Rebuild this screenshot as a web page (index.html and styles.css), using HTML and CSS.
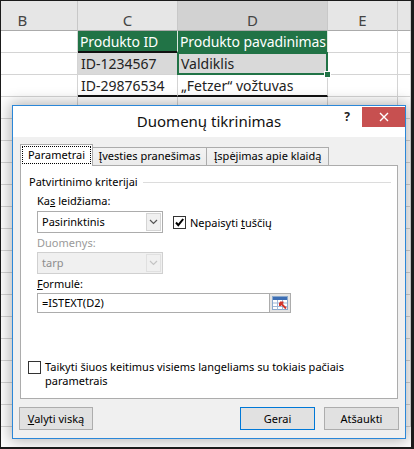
FILE: index.html
```html
<!DOCTYPE html>
<html lang="lt">
<head>
<meta charset="utf-8">
<title>Duomenų tikrinimas</title>
<link rel="stylesheet" href="styles.css">
</head>
<body>
<div class="screen">
  <div class="sheet">
    <div class="h">B</div><div class="h">C</div><div class="h hsel">D</div><div class="h">E</div><div class="h"></div>

    <div class="c"></div><div class="c th th-c"><span>Produkto ID</span></div><div class="c th"><span>Produkto pavadinimas</span></div><div class="c"></div><div class="c"></div>
    <div class="c"></div><div class="c gray"><span>ID-1234567</span></div><div class="c gray active"><span>Valdiklis</span></div><div class="c"></div><div class="c"></div>
    <div class="c"></div><div class="c last"><span>ID-29876534</span></div><div class="c last"><span>„Fetzer“ vožtuvas</span></div><div class="c"></div><div class="c"></div>
    <div class="c"></div><div class="c"></div><div class="c"></div><div class="c"></div><div class="c"></div>
    <div class="c"></div><div class="c"></div><div class="c"></div><div class="c"></div><div class="c"></div>
    <div class="c"></div><div class="c"></div><div class="c"></div><div class="c"></div><div class="c"></div>
    <div class="c"></div><div class="c"></div><div class="c"></div><div class="c"></div><div class="c"></div>
    <div class="c"></div><div class="c"></div><div class="c"></div><div class="c"></div><div class="c"></div>
    <div class="c"></div><div class="c"></div><div class="c"></div><div class="c"></div><div class="c"></div>
    <div class="c"></div><div class="c"></div><div class="c"></div><div class="c"></div><div class="c"></div>
    <div class="c"></div><div class="c"></div><div class="c"></div><div class="c"></div><div class="c"></div>
    <div class="c"></div><div class="c"></div><div class="c"></div><div class="c"></div><div class="c"></div>
    <div class="c"></div><div class="c"></div><div class="c"></div><div class="c"></div><div class="c"></div>
    <div class="c"></div><div class="c"></div><div class="c"></div><div class="c"></div><div class="c"></div>
    <div class="c"></div><div class="c"></div><div class="c"></div><div class="c"></div><div class="c"></div>
    <div class="c"></div><div class="c"></div><div class="c"></div><div class="c"></div><div class="c"></div>
    <div class="c"></div><div class="c"></div><div class="c"></div><div class="c"></div><div class="c"></div>
    <div class="c"></div><div class="c"></div><div class="c"></div><div class="c"></div><div class="c"></div>
  </div>

  <div class="dialog">
    <div class="titlebar">
      <div></div>
      <div class="title">Duomenų tikrinimas</div>
      <div class="ctrls">
        <span class="help">?</span>
        <span class="close">
          <svg width="10" height="10" viewBox="0 0 10 10"><path d="M1 1L9 9M9 1L1 9" stroke="#fff" stroke-width="1.4" fill="none"/></svg>
        </span>
      </div>
    </div>
    <div class="dbody">
      <div class="tabs">
        <div class="tab sel t1"><span class="focus">Parametrai</span></div>
        <div class="tab t2">Įvesties pranešimas</div>
        <div class="tab t3">Įspėjimas apie klaidą</div>
      </div>
      <div class="panel">
        <div class="group"><span>Patvirtinimo kriterijai</span><span class="rule"></span></div>
        <div class="fields">
          <div class="lbl l1">Ka<u>s</u> leidžiama:</div>
          <div class="row">
            <div class="select">
              <span class="val">Pasirinktinis</span>
              <span class="arrow"><svg width="9" height="6" viewBox="0 0 9 6"><path d="M1 1L4.5 4.5L8 1" stroke="#555" stroke-width="1.2" fill="none"/></svg></span>
            </div>
            <div class="check">
              <span class="box"><svg width="11" height="11" viewBox="0 0 11 11"><path d="M2 5.5L4.3 8.2L9.2 2" stroke="#000" stroke-width="2" fill="none"/></svg></span>
              <span>Nepaisyti <u>t</u>uščių</span>
            </div>
          </div>
          <div class="lbl dis l2">Duomenys:</div>
          <div class="select disabled">
            <span class="val">tarp</span>
            <span class="arrow"><svg width="9" height="6" viewBox="0 0 9 6"><path d="M1 1L4.5 4.5L8 1" stroke="#c4c4c4" stroke-width="1.2" fill="none"/></svg></span>
          </div>
          <div class="lbl l3"><u>F</u>ormulė:</div>
          <div class="formula">
            <span class="val">=ISTEXT(D2)</span>
            <span class="ref">
              <svg width="16" height="14" viewBox="0 0 16 14">
                <rect x="0.5" y="0.5" width="15" height="13" fill="#fff" stroke="#8aa8cc"/>
                <rect x="1" y="1" width="14" height="3" fill="#3d6eb4"/>
                <path d="M1 7H15M1 10.5H15M5.5 4V13.5M10.5 4V13.5" stroke="#9fb6d6" stroke-width="1"/>
                <path d="M14 12.5L8 6.5M8 6.5V10M8 6.5H11.5" stroke="#d2342a" stroke-width="2" fill="none"/>
              </svg>
            </span>
          </div>
        </div>
        <div class="apply">
          <span class="box"></span>
          <span class="txt">Taikyti šiuos keitimus visiems langeliams su tokiais pačiais parametrais</span>
        </div>
      </div>
      <div class="buttons">
        <button class="btn clear"><u>V</u>alyti viską</button>
        <button class="btn ok">Gerai</button>
        <button class="btn cancel">Atšaukti</button>
      </div>
    </div>
  </div>
</div>
</body>
</html>
```

FILE: styles.css
```css
html, body {
  margin: 0;
  padding: 0;
  background: #fff;
}

.screen {
  position: relative;
  width: 414px;
  height: 449px;
  box-sizing: border-box;
  border-style: solid;
  border-color: #1b1b1b;
  border-width: 1px 3px 2px 1px;
  overflow: hidden;
  background: #fff;
  font-family: "Noto Sans", "Open Sans", sans-serif;
}

/* ---------- spreadsheet ---------- */
.sheet {
  display: grid;
  grid-template-columns: 110px 100px 150px 70px 1fr;
  grid-template-rows: 30px;
  grid-auto-rows: 22px;
  margin-left: -33px;
}

.h {
  box-sizing: border-box;
  background: #e6e6e6;
  border-right: 1px solid #c8c8c8;
  border-bottom: 1px solid #ababab;
  color: #444;
  font-size: 15px;
  line-height: 19px;
  padding-top: 10px;
  text-align: center;
}

.h.hsel {
  background: #d2d2d2;
}

.c {
  position: relative;
  box-sizing: border-box;
  border-right: 1px solid #d4d4d4;
  border-bottom: 1px solid #d4d4d4;
  font-size: 14px;
  line-height: 21px;
  color: #222;
  white-space: nowrap;
}

.c span {
  display: block;
  padding-left: 3px;
  overflow: hidden;
}

.c.th {
  background: #217346;
  color: #fff;
  border-right-color: #d9e6de;
  border-bottom-color: #217346;
}

.c.th span {
  padding-left: 2px;
  letter-spacing: -0.1px;
}

.c.th-c {
  border-bottom: 2px solid #111;
}

.c.gray {
  background: #d9d9d9;
}

.c.last {
  border-bottom: 2px solid #111;
}

.c.active::after {
  content: "";
  position: absolute;
  left: -1px;
  top: -1px;
  right: -1px;
  bottom: -1px;
  border: 2px solid #217346;
}

.c.active::before {
  content: "";
  position: absolute;
  right: -4px;
  bottom: -4px;
  width: 5px;
  height: 5px;
  background: #217346;
  border: 1px solid #fff;
  z-index: 1;
}

/* ---------- dialog ---------- */
.dialog {
  position: absolute;
  left: 11px;
  top: 104px;
  width: 394px;
  height: 334px;
  box-sizing: border-box;
  border: 1px solid #2b87d8;
  background: #f0f0f0;
  box-shadow: 0 0 14px 2px rgba(0, 0, 0, 0.3);
  display: flex;
  flex-direction: column;
  font-size: 11px;
  color: #000;
}

.titlebar {
  height: 31px;
  flex: none;
  background: #fff;
  display: grid;
  grid-template-columns: 1fr auto 1fr;
}

.title {
  font-size: 15px;
  line-height: 31px;
  color: #111;
  white-space: nowrap;
}

.ctrls {
  display: flex;
  justify-content: flex-end;
  align-items: flex-start;
}

.help {
  font-weight: bold;
  font-size: 12px;
  line-height: 14px;
  margin-top: 4px;
  margin-right: 12px;
  color: #222;
}

.close {
  width: 43px;
  height: 20px;
  margin-top: 1px;
  background: #c75050;
  display: flex;
  align-items: center;
  justify-content: center;
}

.close svg {
  display: block;
}

.dbody {
  flex: 1;
  display: flex;
  flex-direction: column;
  padding: 7px 7px 8px 7px;
}

.tabs {
  display: flex;
  align-items: flex-end;
  height: 21px;
  flex: none;
}

.tab {
  height: 18px;
  box-sizing: border-box;
  border: 1px solid #acacac;
  border-bottom: none;
  background: linear-gradient(#f3f3f3, #ebebeb);
  line-height: 16px;
  text-align: center;
  white-space: nowrap;
  margin-left: -1px;
}

.tab.t1 { width: 73px; }
.tab.t2 { width: 115px; }
.tab.t3 { width: 123px; }

.tab.sel {
  height: 22px;
  margin-left: 0;
  margin-bottom: -1px;
  background: #fff;
  position: relative;
  z-index: 1;
  padding: 2px 2px 0;
}

.focus {
  display: block;
  outline: 1px dotted #000;
  line-height: 16px;
  height: 16px;
}

.panel {
  height: 234px;
  flex: none;
  box-sizing: border-box;
  border: 1px solid #acacac;
  background: #fff;
  padding: 0 6px 0 8px;
}

.group {
  display: flex;
  align-items: center;
  height: 14px;
  line-height: 14px;
  margin-top: 9px;
}

.group .rule {
  flex: 1;
  height: 1px;
  background: #dcdcdc;
  margin-left: 5px;
}

.fields {
  padding-left: 8px;
}

.lbl {
  line-height: 14px;
  height: 14px;
}

.lbl.l1 { margin-top: 5px; }
.lbl.l2 { margin-top: 3px; }
.lbl.l3 { margin-top: 3px; }

.lbl.dis {
  color: #9a9a9a;
}

.row {
  display: flex;
  align-items: center;
  margin-top: 3px;
}

.select {
  display: flex;
  width: 126px;
  height: 22px;
  box-sizing: border-box;
  border: 1px solid #acacac;
  background: #fff;
}

.select.disabled {
  margin-top: 2px;
  background: #f0f0f0;
  border-color: #d0d0d0;
  color: #8d8d8d;
}

.val {
  flex: 1;
  padding-left: 4px;
  line-height: 20px;
}

.arrow {
  width: 15px;
  margin: 1px 1px 1px 0;
  box-sizing: border-box;
  border: 1px solid #d4d4d4;
  background: #f0f0f0;
  display: flex;
  align-items: center;
  justify-content: center;
}

.select.disabled .arrow {
  border-color: #e0e0e0;
  background: #f0f0f0;
}

.check {
  display: flex;
  align-items: center;
  margin-left: 10px;
}

.box {
  width: 13px;
  height: 13px;
  box-sizing: border-box;
  border: 1px solid #333;
  background: #fff;
  display: flex;
  align-items: center;
  justify-content: center;
  flex: none;
}

.check .box {
  margin-right: 4px;
}

.formula {
  display: flex;
  width: 254px;
  height: 20px;
  margin-top: 2px;
  box-sizing: border-box;
  border: 1px solid #acacac;
  background: #fff;
}

.formula .val {
  line-height: 18px;
}

.ref {
  width: 21px;
  box-sizing: border-box;
  border-left: 1px solid #acacac;
  background: #e4e4e4;
  display: flex;
  align-items: center;
  justify-content: center;
}

.apply {
  display: flex;
  align-items: flex-start;
  margin-top: 47px;
  margin-left: -1px;
}

.apply .box {
  margin-top: 1px;
  margin-right: 4px;
}

.apply .txt {
  line-height: 14px;
  max-width: 320px;
}

.buttons {
  display: flex;
  margin: 8px -1px 0;
  flex: none;
}

.btn {
  height: 23px;
  box-sizing: border-box;
  border: 1px solid #adadad;
  background: #e1e1e1;
  font-family: inherit;
  font-size: 11px;
  color: #000;
  padding: 0;
}

.btn.clear { width: 74px; }
.btn.ok { width: 75px; margin-left: auto; border-color: #0078d7; }
.btn.cancel { width: 75px; margin-left: 9px; }
```
